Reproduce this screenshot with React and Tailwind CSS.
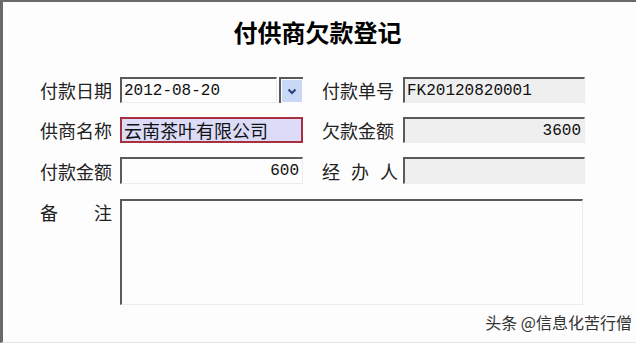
import React from "react";

const cjk = { fontFamily: '"Noto Sans CJK SC", "Noto Sans", sans-serif' };
const mono = { fontFamily: '"Liberation Mono", "Noto Sans CJK SC", monospace' };

const sunken =
  "border-t-2 border-l-2 border-b border-r border-t-[#5a5a5a] border-l-[#5a5a5a] border-b-[#ececec] border-r-[#ececec]";

function Label({ children, spread, w = "w-[72px]" }) {
  return (
    <div
      className={`${w} shrink-0 whitespace-nowrap text-[18px] leading-none text-[#222] flex items-center ${
        spread ? "justify-between" : ""
      }`}
      style={cjk}
    >
      {children}
    </div>
  );
}

function Field({ value, right, gray, className = "" }) {
  return (
    <div
      className={`${sunken} shrink-0 flex items-center px-[2px] text-[16px] text-[#111] ${
        right ? "justify-end pr-[3px]" : ""
      } ${gray ? "bg-[#efefef]" : "bg-[#fdfdfd]"} ${className}`}
      style={mono}
    >
      {value}
    </div>
  );
}

function Row({ children, className = "" }) {
  return <div className={`flex items-center ${className}`}>{children}</div>;
}

export default function App() {
  return (
    <div className="w-[640px] h-[345px] bg-white overflow-hidden">
      <div className="w-[636px] h-[343px] border-t-2 border-l-[3px] border-b border-[#6a6a6a] border-b-[#e4e4e4] bg-[#fdfdfd] flex flex-col">
        <h1
          className="text-[24px] font-bold text-black text-center leading-none mt-[18px] ml-[-4px]"
          style={cjk}
        >
          付供商欠款登记
        </h1>

        <div className="mt-[33px] pl-[37px] flex flex-col gap-[14px]">
          <Row>
            <Label>付款日期</Label>
            <div className="ml-[8px] flex gap-[2px]">
              <Field value="2012-08-20" className="w-[157px] h-[26px]" />
              <div className="w-[24px] h-[26px] border-t-2 border-l-2 border-[#5a5a5a] p-[1px]">
                <div className="w-full h-full bg-[#c9d8f6] flex items-center justify-center">
                  <svg width="10" height="7" viewBox="0 0 10 7">
                    <path d="M1.5 1.5 L5 5 L8.5 1.5" fill="none" stroke="#2b3f78" strokeWidth="2" />
                  </svg>
                </div>
              </div>
            </div>
            <div className="ml-[19px]">
              <Label w="w-[76px]">付款单号</Label>
            </div>
            <Field value="FK20120820001" gray className="ml-[5px] w-[182px] h-[26px]" />
          </Row>

          <Row>
            <Label>供商名称</Label>
            <div
              className="ml-[8px] w-[183px] h-[26px] border-2 border-[#a8303e] bg-[#dcdcf9] flex items-center px-[2px] text-[18px] text-[#111] leading-none whitespace-nowrap"
              style={cjk}
            >
              云南茶叶有限公司
            </div>
            <div className="ml-[19px]">
              <Label w="w-[76px]">欠款金额</Label>
            </div>
            <Field value="3600" right gray className="ml-[5px] w-[182px] h-[26px]" />
          </Row>

          <Row>
            <Label>付款金额</Label>
            <Field value="600" right className="ml-[8px] w-[183px] h-[27px]" />
            <div className="ml-[19px]">
              <Label spread w="w-[76px]">
                <span>经</span>
                <span>办</span>
                <span>人</span>
              </Label>
            </div>
            <Field value="" gray className="ml-[5px] w-[182px] h-[27px]" />
          </Row>

          <div className="flex items-start mt-[1px]">
            <div className="pt-[4px]">
              <Label spread>
                <span>备</span>
                <span>注</span>
              </Label>
            </div>
            <div className={`ml-[8px] ${sunken} h-[106px] w-[463px] bg-[#fdfdfd]`} />
          </div>
        </div>

        <div className="flex justify-end mt-[9px] pr-[4px]">
          <span className="text-[16px] text-[#333] leading-none" style={cjk}>
            头条 @信息化苦行僧
          </span>
        </div>
      </div>
    </div>
  );
}
